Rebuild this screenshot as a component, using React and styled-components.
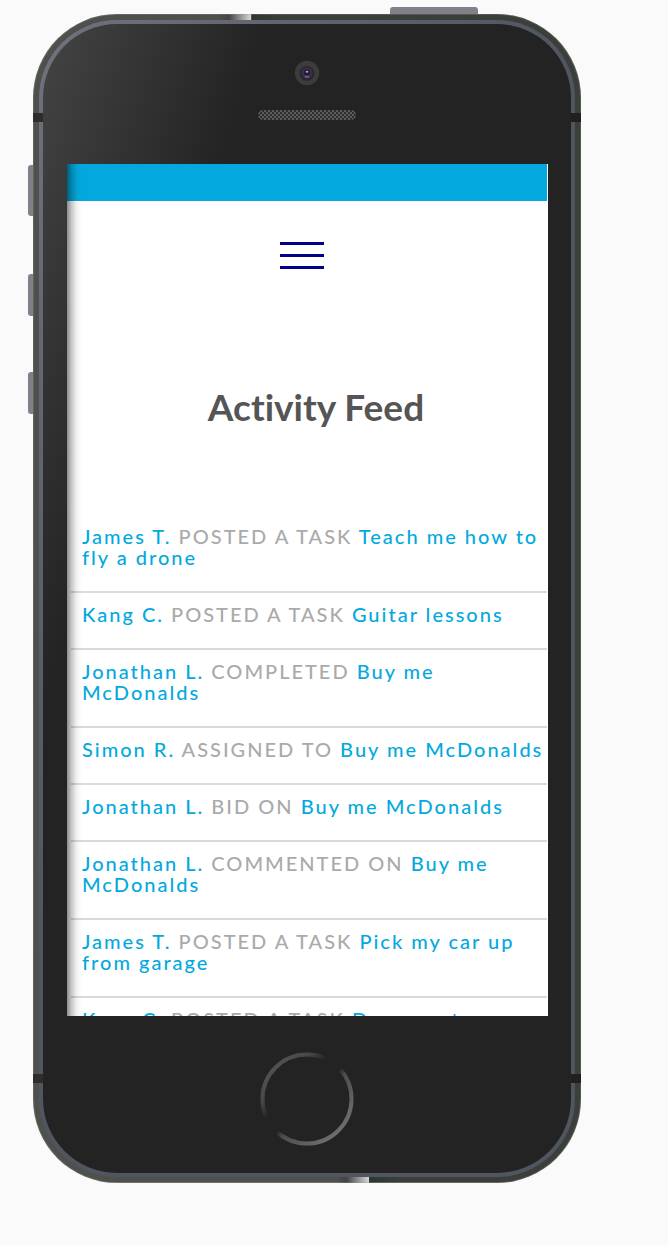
import React from "react";
import styled, { createGlobalStyle } from "styled-components";

const GlobalStyle = createGlobalStyle`
  *, *::before, *::after { box-sizing: border-box; }
  body {
    margin: 0;
    background: #fafafa;
    font-family: Lato, "Open Sans", sans-serif;
  }
`;

const Page = styled.div`
  padding: 14px 87px 62px 33px;
`;

const Rim = styled.div`
  position: relative;
  padding: 6px;
  border-radius: 84px;
  background:
    linear-gradient(90deg, transparent, #444 30%, #d8d8d8) 36% 0 / 32px 6px no-repeat,
    linear-gradient(90deg, transparent, #444 30%, #d8d8d8) 59% 100% / 32px 6px no-repeat,
    linear-gradient(90deg, #4e504b 40%, #2d362f 40%, #3a3f3a 46%) 0 0 / 100% 50% no-repeat,
    linear-gradient(90deg, #4e504b 61%, #2d362f 61%, #3a3f3a 67%) 0 100% / 100% 52% no-repeat;
  box-shadow: inset 0 0 0 1px rgba(150, 150, 150, 0.3);
`;

const Bevel = styled.div`
  padding: 4px;
  border-radius: 78px;
  background: linear-gradient(120deg, #70727d, #50555f 45%);
`;

const Face = styled.div`
  display: flex;
  flex-direction: column;
  align-items: center;
  padding: 36px 0 27px;
  border-radius: 74px;
  background: linear-gradient(108deg, #414141 20px, #232323 215px);
`;

const sides = {
  top: "top: -7px; right: 103px; width: 88px; height: 7px; border-radius: 3px 3px 0 0;",
  left: "left: -5px; width: 5px; border-radius: 3px 0 0 3px;",
};

const SideKey = styled.span`
  position: absolute;
  background: #827f88;
  ${({ $side }) => sides[$side]}
  ${({ $y }) => $y && `top: ${$y}px;`}
  ${({ $length }) => $length && `height: ${$length}px;`}
`;

const AntennaBand = styled.span`
  position: absolute;
  width: 10px;
  height: 9px;
  background: ${({ $edge }) => ($edge === "left" ? "#2d2d2d" : "#202020")};
  ${({ $edge }) => $edge}: 0;
  ${({ $end }) => ($end === "top" ? "top: 99px" : "bottom: 100px")};
`;

const Camera = styled.svg`
  width: 26px;
  height: 26px;
`;

const Speaker = styled.div`
  width: 98px;
  height: 10px;
  margin: 24px 0 44px;
  border-radius: 5px;
  background: repeating-conic-gradient(#5c5c5c 0 25%, #2e2e2e 0 50%) 0 0 / 4px 4px;
`;

const Screen = styled.div`
  position: relative;
  align-self: stretch;
  min-height: 0;
  margin: 0 23px 0 24px;
  aspect-ratio: 481 / 852;
  padding-right: 1px;
  overflow: hidden;
  background: #fff;

  &::after {
    content: "";
    position: absolute;
    inset: 0 auto 0 0;
    width: 15px;
    pointer-events: none;
    background: linear-gradient(90deg, rgba(0, 0, 0, 0.45), rgba(0, 0, 0, 0.22) 30%, rgba(0, 0, 0, 0.05) 65%, transparent);
  }
`;

const StatusBar = styled.div`
  height: 37px;
  background: #03a9de;
`;

const Nav = styled.nav`
  display: flex;
  justify-content: center;
  padding: 41px 10px 0 0;
`;

const MenuButton = styled.button`
  display: flex;
  flex-direction: column;
  gap: 9px;
  width: 44px;
  padding: 0;
  border: 0;
  background: none;
`;

const MenuLine = styled.span`
  width: 100%;
  height: 3px;
  background: #00008b;
`;

const Title = styled.h1`
  margin: 0;
  padding: 114px 0 84px 18px;
  color: #555;
  font-size: 37px;
  font-weight: 700;
  font-variant-ligatures: none;
  line-height: 48px;
  text-align: center;
`;

const Feed = styled.ul`
  margin: 0 0 0 4px;
  padding: 0;
  list-style: none;
`;

const FeedItem = styled.li`
  padding: 11px 0 23px 11px;
  border-bottom: 2px solid #dadada;
  color: #aaa;
  font-size: 20px;
  font-weight: 500;
  line-height: 21px;
  letter-spacing: 2px;
`;

const FeedLink = styled.a`
  color: #03a9de;
  text-decoration: none;
`;

const HomeButton = styled.button`
  width: 94px;
  height: 94px;
  margin-top: 36px;
  padding: 0;
  border: 0;
  border-radius: 50%;
  background: none;

  svg { display: block; }
`;

const activity = [
  { who: "James T.", action: "POSTED A TASK", task: "Teach me how to fly a drone" },
  { who: "Kang C.", action: "POSTED A TASK", task: "Guitar lessons" },
  { who: "Jonathan L.", action: "COMPLETED", task: "Buy me McDonalds" },
  { who: "Simon R.", action: "ASSIGNED TO", task: "Buy me McDonalds" },
  { who: "Jonathan L.", action: "BID ON", task: "Buy me McDonalds" },
  { who: "Jonathan L.", action: "COMMENTED ON", task: "Buy me McDonalds" },
  { who: "James T.", action: "POSTED A TASK", task: "Pick my car up from garage" },
  { who: "Kang C.", action: "POSTED A TASK", task: "Document" },
];

function CameraLens() {
  return (
    <Camera viewBox="0 0 26 26" aria-hidden="true">
      <circle cx="13" cy="13" r="12.2" fill="#3c3c3c" />
      <circle cx="13" cy="13.4" r="7.4" fill="#29292b" />
      <circle cx="13" cy="13" r="5.4" fill="#392e50" />
      <circle cx="13" cy="12.4" r="3" fill="#211a32" />
      <ellipse cx="13" cy="11.7" rx="1.4" ry="1" fill="#aaa3b5" />
      <ellipse cx="13" cy="16.8" rx="2.6" ry="1" fill="#705f91" />
    </Camera>
  );
}

function HomeRing() {
  return (
    <svg width="94" height="94" viewBox="0 0 94 94" aria-hidden="true">
      <defs>
        <linearGradient id="ring" x1="0.15" y1="0.15" x2="0.85" y2="0.85">
          <stop offset="0" stopColor="#505050" />
          <stop offset="0.16" stopColor="#484848" />
          <stop offset="0.33" stopColor="#232323" />
          <stop offset="0.52" stopColor="#232323" />
          <stop offset="0.6" stopColor="#4c4c4c" />
          <stop offset="1" stopColor="#6c6c6c" />
        </linearGradient>
      </defs>
      <circle cx="47" cy="47" r="44.5" fill="none" stroke="url(#ring)" strokeWidth="4" />
    </svg>
  );
}

export default function App() {
  return (
    <>
      <GlobalStyle />
      <Page>
        <Rim>
          <SideKey $side="top" />
          <SideKey $side="left" $y={151} $length={51} />
          <SideKey $side="left" $y={260} $length={42} />
          <SideKey $side="left" $y={358} $length={42} />
          <Bevel>
            <Face>
              <CameraLens />
              <Speaker />
              <Screen>
                <StatusBar />
                <Nav>
                  <MenuButton type="button" aria-label="Menu">
                    <MenuLine />
                    <MenuLine />
                    <MenuLine />
                  </MenuButton>
                </Nav>
                <Title>Activity Feed</Title>
                <Feed>
                  {activity.map(({ who, action, task }, i) => (
                    <FeedItem key={i}>
                      <FeedLink href="#user">{who}</FeedLink> {action}{" "}
                      <FeedLink href="#task">{task}</FeedLink>
                    </FeedItem>
                  ))}
                </Feed>
              </Screen>
              <HomeButton type="button" aria-label="Home">
                <HomeRing />
              </HomeButton>
            </Face>
          </Bevel>
          <AntennaBand $edge="left" $end="top" />
          <AntennaBand $edge="right" $end="top" />
          <AntennaBand $edge="left" $end="bottom" />
          <AntennaBand $edge="right" $end="bottom" />
        </Rim>
      </Page>
    </>
  );
}
